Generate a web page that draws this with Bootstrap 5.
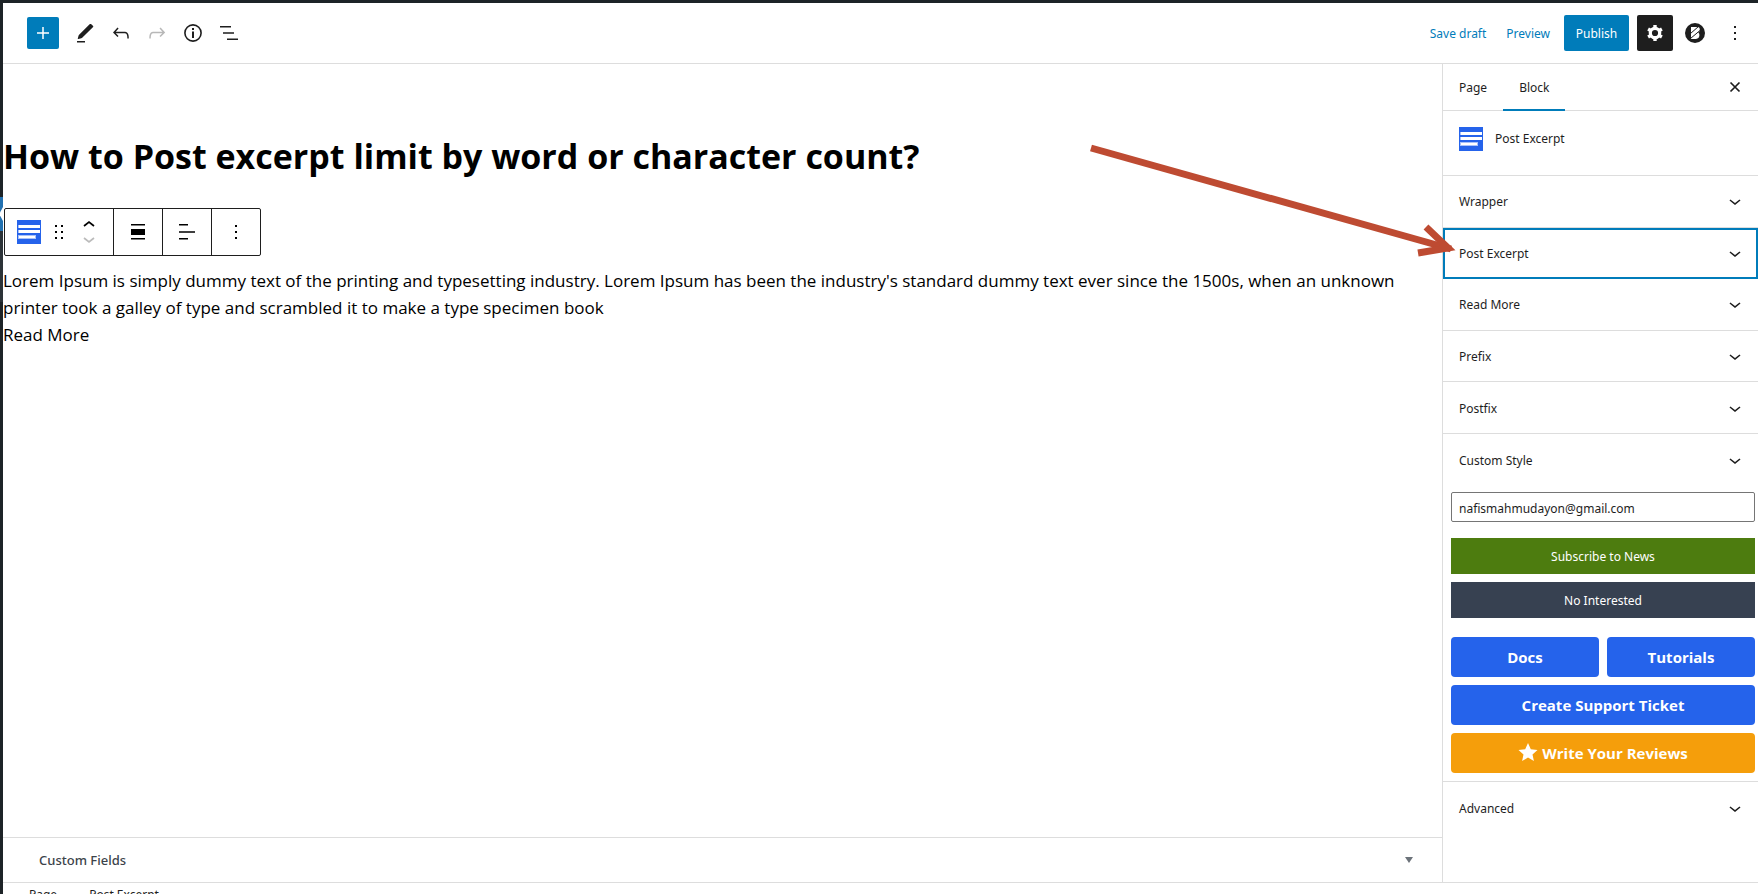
<!DOCTYPE html>
<html lang="en">
<head>
<meta charset="utf-8">
<title>Edit Page</title>
<meta name="viewport" content="width=device-width, initial-scale=1">
<link rel="stylesheet" href="https://cdn.jsdelivr.net/npm/bootstrap@5.3.0/dist/css/bootstrap.min.css">
<style>
  :root { --line: #ddd; --ink: #1e1e1e; --wp-blue: #007cba; --royal: #2563eb; }
  body { font-family: "Noto Sans", "Open Sans", sans-serif; font-size: 12px; line-height: 20px; color: var(--ink); background: #fff; }
  .app { height: 100vh; border-top: 3px solid #1d2327; overflow: hidden; }
  svg { display: block; flex: none; }
  button { color: inherit; }
  .menu-strip { width: 3px; background: #1d2327; }
  .menu-strip .before { height: 194px; }
  .menu-strip .current { height: 34px; background: #2271b1; }
  .menu-strip .current i { height: 14px; background: #fff; clip-path: polygon(100% 0, 100% 100%, 0 60%, 0 40%); }
  .menu-strip .submenu { height: 71px; background: #2c3338; }
  .topbar { height: 61px; border-bottom: 1px solid var(--line); padding: 0 5px 0 24px; }
  .icon-btn { width: 36px; height: 36px; border: 0; border-radius: 2px; background: none; padding: 0; display: flex; align-items: center; justify-content: center; }
  .add-btn { width: 32px; height: 32px; background: var(--wp-blue); color: #fff; }
  .dark-btn { background: var(--ink); color: #fff; }
  .top-links { gap: 20px; margin-right: 14px; padding-top: 2px; }
  .top-links a { color: var(--wp-blue); text-decoration: none; }
  .publish { width: 65px; height: 36px; border: 0; border-radius: 2px; background: var(--wp-blue); color: #fff; padding: 2px 0 0; }
  .canvas { color: #000; padding-top: 66px; font-family: "Open Sans", "Noto Sans", sans-serif; }
  .canvas h1 { font-size: 34px; line-height: 52px; font-weight: 700; }
  .canvas .excerpt { font-size: 17px; line-height: 27px; padding-right: 40px; }
  .tools { height: 48px; width: max-content; border: 1px solid var(--ink); border-radius: 2px; margin: 26px 0 11px 1px; background: #fff; }
  .tools > div { border-left: 1px solid var(--ink); width: 49px; }
  .tools > .first-set { border-left: 0; width: 108px; padding-left: 12px; }
  .tools button { border: 0; background: none; padding: 0; height: 100%; }
  .meta-row { height: 45px; border: 0; border-top: 1px solid var(--line); background: #fff; padding: 0 28px 0 36px; font-size: 13px; font-weight: 500; color: #3c434a; }
  .side { width: 316px; border-left: 1px solid var(--line); }
  .side-tabs { height: 47px; border-bottom: 1px solid var(--line); padding-right: 5px; }
  .side-tabs .tab { border: 0; background: none; height: 47px; padding: 2px 16px 0; }
  .side-tabs .tab.active { box-shadow: inset 0 -2px var(--wp-blue); }
  .block-card { height: 65px; padding: 16px; border-bottom: 1px solid var(--line); line-height: 24px; }
  .panels { height: 258px; }
  .panel-btn { border: 0; border-bottom: 1px solid var(--line); background: none; padding: 2px 11px 0 16px; flex: 1; text-align: left; }
  .panel-btn.chosen { outline: 2px solid var(--wp-blue); outline-offset: -2px; }
  .panel-tall { flex: none; height: 52px; border-bottom: 0; }
  .promo { padding: 6px 3px 8px 8px; border-bottom: 1px solid var(--line); }
  .promo input { height: 30px; border: 1px solid #757575; border-radius: 2px; padding: 2px 7px 0; color: var(--ink); margin-bottom: 16px; }
  .flat { border: 0; color: #fff; height: 36px; margin-bottom: 8px; padding-top: 2px; }
  .green { background: #4d7c0f; }
  .slate { background: #374151; margin-bottom: 19px; }
  .promo .big { height: 40px; border-radius: 4px; background: var(--royal); color: #fff; font-size: 15px; font-weight: 700; text-decoration: none; font-family: "Open Sans", "Noto Sans", sans-serif; }
  .promo .amber { background: #f59e0b; }
  .crumbs { height: 12px; border-top: 1px solid var(--line); padding: 2px 26px 0; gap: 10px; }
  .pointer { left: 1085px; top: 140px; pointer-events: none; }
</style>
</head>
<body>
<svg width="0" height="0" class="position-absolute" aria-hidden="true">
  <symbol id="chev" viewBox="0 0 24 24"><path d="M17.500 10.600 12 15l-5.500-4.400.9-1.200L12 13l4.500-3.600z" fill="currentColor"/></symbol>
  <symbol id="excerpt" viewBox="0 0 24 24"><path fill="#2563eb" d="M0 0h24v24H0z"/><path fill="#a9c1f8" d="M1 5h22v3H1zM1 10h22v3H1zM1 15h18v4H1z"/><path fill="#fff" d="M2 5h21v3H2zM2 10h21v3H2zM2 16h16v2H2z"/></symbol>
  <symbol id="dots" viewBox="0 0 24 24"><path fill="currentColor" d="M11 5h2v2h-2zM11 11h2v2h-2zM11 17h2v2h-2z"/></symbol>
</svg>
<div class="app d-flex">
  <div class="menu-strip flex-shrink-0">
    <div class="before"></div>
    <div class="current d-flex flex-column justify-content-center"><i></i></div>
    <div class="submenu"></div>
  </div>
  <div class="flex-grow-1 d-flex flex-column" style="min-width:0">
    <header class="topbar d-flex align-items-center justify-content-between flex-shrink-0">
      <div class="d-flex align-items-center">
        <button class="icon-btn add-btn me-2" aria-label="Add block"><svg width="24" height="24"><path d="M12 6v12M6 12h12" stroke="currentColor" stroke-width="1.500"/></svg></button>
        <button class="icon-btn" aria-label="Edit"><svg width="24" height="24" viewBox="0 0 24 24"><path fill="currentColor" d="m20.100 5.100-1.800-1.800c-.5-.5-1.200-.5-1.700 0L6.100 13.700c-.3.300-.4.600-.5.900l-.8 2.900c-.1.400.2.700.6.600l2.900-.8c.3-.1.600-.3.900-.5L20.100 6.100c.3-.3.300-.7 0-1zM4 20h8v1.500H4z"/></svg></button>
        <button class="icon-btn" aria-label="Undo"><svg width="24" height="24" viewBox="0 0 24 24"><path fill="currentColor" d="M18.300 11.700c-.6-.6-1.400-.9-2.300-.9H6.700l2.900-3.300-1.100-1-4.500 5L8.500 16l1-1-2.700-2.700H16c.5 0 .9.200 1.300.5 1 1 1 3.400 1 4.500v.3h1.500v-.2c0-1.500 0-4.300-1.500-5.700z"/></svg></button>
        <button class="icon-btn" aria-label="Redo"><svg width="24" height="24" viewBox="0 0 24 24"><path fill="#b8b8b8" d="M15.600 6.500l-1.100 1 2.900 3.300H8c-.9 0-1.700.3-2.300.9-1.400 1.500-1.400 4.200-1.400 5.600v.2h1.500v-.3c0-1.100 0-3.500 1-4.500.3-.3.700-.5 1.300-.5h9.200L14.500 15l1.100 1.100 4.600-4.600-4.600-5z"/></svg></button>
        <button class="icon-btn" aria-label="Details"><svg width="24" height="24" viewBox="0 0 24 24"><circle cx="12" cy="12" r="8.100" fill="none" stroke="currentColor" stroke-width="1.600"/><path fill="currentColor" d="M11 7h2v2h-2zM11 10.500h2V17h-2z"/></svg></button>
        <button class="icon-btn" aria-label="Outline"><svg width="24" height="24" viewBox="0 0 24 24"><path fill="currentColor" d="M3 5h11v1.600H3zM6 11.200h11v1.600H6zM10 17.400h11V19H10z"/></svg></button>
      </div>
      <div class="d-flex align-items-center">
        <nav class="top-links d-flex" aria-label="Document"><a href="#">Save draft</a><a href="#">Preview</a></nav>
        <button class="publish me-2">Publish</button>
        <button class="icon-btn dark-btn" aria-label="Settings"><svg width="24" height="24" viewBox="0 0 24 24"><g fill="none" stroke="currentColor"><circle cx="12" cy="12" r="4.700" stroke-width="3.200"/><path stroke-width="3.400" d="M12 4v3M12 17v3M5.100 8l2.600 1.500M16.300 14.500l2.600 1.500M5.100 16l2.600-1.500M16.300 9.500 18.900 8"/></g></svg></button>
        <button class="icon-btn ms-1" aria-label="Post blocks"><svg width="20" height="20" viewBox="0 0 20 20"><circle cx="10" cy="10" r="10" fill="currentColor"/><path fill="#fff" d="M6 4h6.500Q15 4.200 14.800 7q-.2 2-1.600 2.600 1.500.8 1.200 3-.4 3.200-3.400 3.400H6z"/><path stroke="#1e1e1e" d="m5.500 10.500 8-7M5.500 15.500l9.500-8"/></svg></button>
        <button class="icon-btn ms-1" aria-label="Options"><svg width="24" height="24"><use href="#dots"/></svg></button>
      </div>
    </header>
    <div class="flex-grow-1 d-flex" style="min-height:0">
      <main class="flex-grow-1 d-flex flex-column" style="min-width:0">
        <section class="canvas flex-grow-1">
          <h1 class="m-0">How to Post excerpt limit by word or character count?</h1>
          <div class="tools d-flex" role="toolbar" aria-label="Block tools">
            <div class="first-set d-flex align-items-center">
              <button aria-label="Post Excerpt"><svg width="24" height="24"><use href="#excerpt"/></svg></button>
              <button class="ms-2" aria-label="Drag"><svg width="20" height="24" viewBox="0 0 20 24"><path fill="currentColor" d="M6 5h2v2H6zM12 5h2v2h-2zM6 11h2v2H6zM12 11h2v2h-2zM6 17h2v2H6zM12 17h2v2h-2z"/></svg></button>
              <button class="ms-2" aria-label="Move"><svg width="24" height="36" viewBox="0 0 24 36" fill="none" stroke-width="1.700"><path stroke="currentColor" d="m7 12 5-4 5 4"/><path stroke="#bbb" d="m7 24 5 4 5-4"/></svg></button>
            </div>
            <div><button class="w-100 d-flex align-items-center justify-content-center" aria-label="Align"><svg width="24" height="24"><path fill="currentColor" d="M5 9h14v6H5zM5 4h14v1.600H5zM5 18h14v1.600H5z"/></svg></button></div>
            <div><button class="w-100 d-flex align-items-center justify-content-center" aria-label="Align text"><svg width="24" height="24"><path fill="currentColor" d="M4 4h9v1.600H4zM4 11.200h16v1.600H4zM4 18h9v1.600H4z"/></svg></button></div>
            <div><button class="w-100 d-flex align-items-center justify-content-center" aria-label="More"><svg width="24" height="24"><use href="#dots"/></svg></button></div>
          </div>
          <div class="excerpt">Lorem Ipsum is simply dummy text of the printing and typesetting industry. Lorem Ipsum has been the industry's standard dummy text ever since the 1500s, when an unknown printer took a galley of type and scrambled it to make a type specimen book<br>Read More</div>
        </section>
        <button class="meta-row d-flex align-items-center justify-content-between"><span>Custom Fields</span><svg width="10" height="6"><path d="M1 0h8L5 6z" fill="#6c737a"/></svg></button>
      </main>
      <aside class="side flex-shrink-0">
        <div class="side-tabs d-flex align-items-center">
          <button class="tab">Page</button>
          <button class="tab active">Block</button>
          <button class="icon-btn ms-auto" aria-label="Close"><svg width="24" height="24"><path d="m7.500 7.500 9 9m0-9-9 9" stroke="currentColor" stroke-width="1.700"/></svg></button>
        </div>
        <div class="block-card d-flex"><svg width="24" height="24"><use href="#excerpt"/></svg><span class="ms-2 ps-1">Post Excerpt</span></div>
        <div class="panels d-flex flex-column">
          <button class="panel-btn d-flex align-items-center justify-content-between">Wrapper<svg width="24" height="24"><use href="#chev"/></svg></button>
          <button class="panel-btn chosen d-flex align-items-center justify-content-between">Post Excerpt<svg width="24" height="24"><use href="#chev"/></svg></button>
          <button class="panel-btn d-flex align-items-center justify-content-between">Read More<svg width="24" height="24"><use href="#chev"/></svg></button>
          <button class="panel-btn d-flex align-items-center justify-content-between">Prefix<svg width="24" height="24"><use href="#chev"/></svg></button>
          <button class="panel-btn d-flex align-items-center justify-content-between">Postfix<svg width="24" height="24"><use href="#chev"/></svg></button>
        </div>
        <button class="panel-btn panel-tall w-100 d-flex align-items-center justify-content-between">Custom Style<svg width="24" height="24"><use href="#chev"/></svg></button>
        <div class="promo">
          <input type="email" class="w-100 d-block" aria-label="Email" value="nafismahmudayon@gmail.com">
          <button class="flat green w-100 d-block">Subscribe to News</button>
          <button class="flat slate w-100 d-block">No Interested</button>
          <div class="d-flex flex-column gap-2">
            <div class="d-flex gap-2">
              <a href="#" class="big w-50 d-flex align-items-center justify-content-center">Docs</a>
              <a href="#" class="big w-50 d-flex align-items-center justify-content-center">Tutorials</a>
            </div>
            <a href="#" class="big d-flex align-items-center justify-content-center">Create Support Ticket</a>
            <a href="#" class="big amber d-flex align-items-center justify-content-center gap-1"><svg width="20" height="20" viewBox="0 0 20 20"><path fill="#fff" d="m10 0 2.800 6.200 6.700.7-5 4.500 1.400 6.600L10 14.600 4.100 18l1.400-6.600-5-4.500 6.700-.7z"/></svg>Write Your Reviews</a>
          </div>
        </div>
        <button class="panel-btn panel-tall w-100 d-flex align-items-center justify-content-between">Advanced<svg width="24" height="24"><use href="#chev"/></svg></button>
      </aside>
    </div>
    <footer class="crumbs d-flex flex-shrink-0"><span>Page</span><span>→</span><span>Post Excerpt</span></footer>
  </div>
</div>
<!-- Callout arrow drawn over the editor -->
<svg class="pointer position-absolute" width="376" height="124" aria-hidden="true"><path d="M6 8 366 109" stroke="#be4b32" stroke-width="7" fill="none"/><path d="M341 87 363 108 333 113" stroke="#be4b32" stroke-width="7" fill="none"/></svg>
<script src="https://cdn.jsdelivr.net/npm/bootstrap@5.3.0/dist/js/bootstrap.bundle.min.js"></script>
</body>
</html>
